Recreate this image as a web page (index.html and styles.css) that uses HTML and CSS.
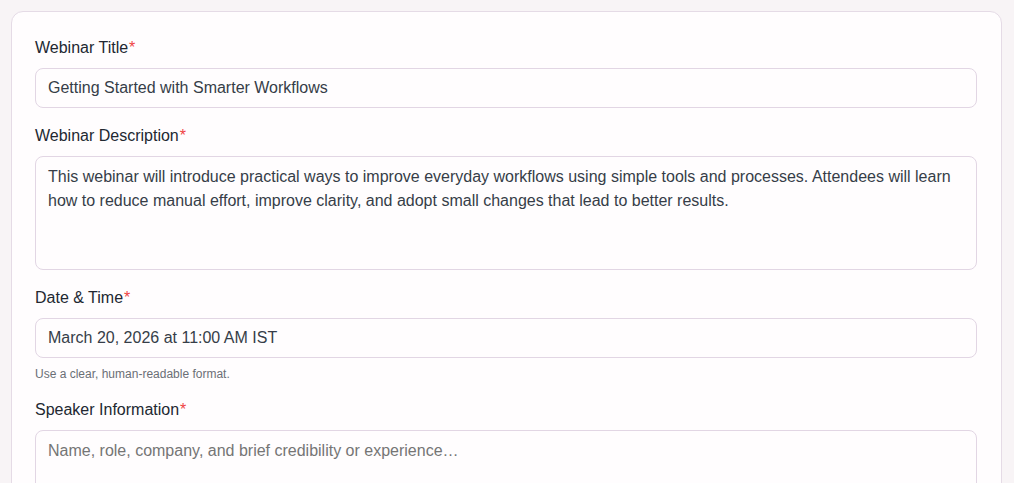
FILE: index.html
```html
<!DOCTYPE html>
<html lang="en">
<head>
<meta charset="utf-8">
<title>Webinar form</title>
<link rel="stylesheet" href="styles.css">
</head>
<body>
<main class="page">
  <form class="card">
    <div class="field">
      <label class="label" for="title">Webinar Title<span class="req">*</span></label>
      <input class="control" id="title" type="text" value="Getting Started with Smarter Workflows">
    </div>
    <div class="field">
      <label class="label" for="desc">Webinar Description<span class="req">*</span></label>
      <textarea class="control area" id="desc" rows="4">This webinar will introduce practical ways to improve everyday workflows using simple tools and processes. Attendees will learn how to reduce manual effort, improve clarity, and adopt small changes that lead to better results.</textarea>
    </div>
    <div class="field">
      <label class="label" for="date">Date &amp; Time<span class="req">*</span></label>
      <input class="control" id="date" type="text" value="March 20, 2026 at 11:00 AM IST">
      <p class="hint">Use a clear, human-readable format.</p>
    </div>
    <div class="field">
      <label class="label" for="speaker">Speaker Information<span class="req">*</span></label>
      <textarea class="control area" id="speaker" rows="4" placeholder="Name, role, company, and brief credibility or experience…"></textarea>
    </div>
  </form>
</main>
</body>
</html>
```
FILE: styles.css
```css
html, body {
  margin: 0;
  padding: 0;
  background: #f8f4f6;
  font-family: "Liberation Sans", Arial, sans-serif;
  color: #1f2937;
}
.page {
  padding: 11px 12px 20px 11px;
}
.card {
  background: #fffdfe;
  border: 1px solid #e5dbe6;
  border-radius: 12px;
  padding: 24px 24px 24px 23px;
  display: flex;
  flex-direction: column;
  gap: 16px;
}
.field {
  display: flex;
  flex-direction: column;
}
.label {
  font-size: 16px;
  line-height: 24px;
  color: #222831;
  margin-bottom: 8px;
}
.req {
  color: #ef4444;
  margin-left: 1px;
}
.control {
  box-sizing: border-box;
  width: 100%;
  margin: 0;
  font-family: "Liberation Sans", Arial, sans-serif;
  font-size: 16px;
  line-height: 24px;
  color: #363d48;
  background: #fffdfe;
  border: 1px solid #e2d6e4;
  border-radius: 8px;
  padding: 7px 12px;
  height: 40px;
  outline: none;
}
.area {
  height: 114px;
  padding: 8px 12px;
  resize: none;
  display: block;
}
.area::placeholder {
  color: #757575;
}
.hint {
  margin: 7px 0 -1px;
  font-size: 12px;
  line-height: 18px;
  color: #6b6f76;
}
```
